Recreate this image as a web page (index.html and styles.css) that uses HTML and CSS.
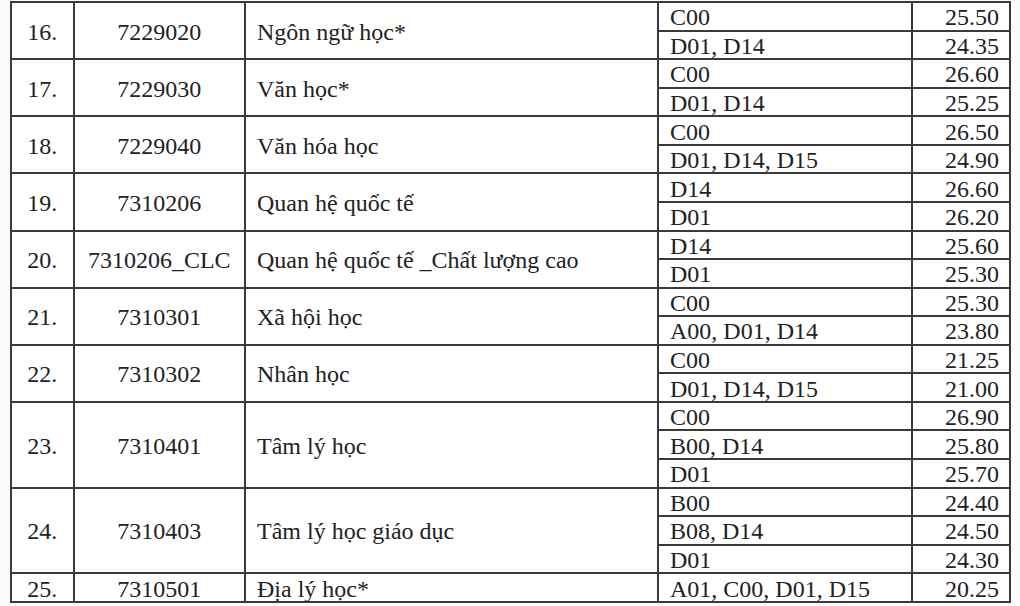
FILE: index.html
```html
<!DOCTYPE html>
<html lang="vi">
<head>
<meta charset="utf-8">
<title>Điểm chuẩn</title>
<link rel="stylesheet" href="styles.css">
</head>
<body>
<div class="page">
<table class="scores">
  <colgroup>
    <col class="c-stt"><col class="c-code"><col class="c-name"><col class="c-combo"><col class="c-score">
  </colgroup>
  <tbody>
    <tr><td class="stt" rowspan="2">16.</td><td class="code" rowspan="2">7229020</td><td class="name" rowspan="2">Ngôn ngữ học*</td><td class="combo">C00</td><td class="score">25.50</td></tr>
    <tr><td class="combo">D01, D14</td><td class="score">24.35</td></tr>

    <tr><td class="stt" rowspan="2">17.</td><td class="code" rowspan="2">7229030</td><td class="name" rowspan="2">Văn học*</td><td class="combo">C00</td><td class="score">26.60</td></tr>
    <tr><td class="combo">D01, D14</td><td class="score">25.25</td></tr>

    <tr><td class="stt" rowspan="2">18.</td><td class="code" rowspan="2">7229040</td><td class="name" rowspan="2">Văn hóa học</td><td class="combo">C00</td><td class="score">26.50</td></tr>
    <tr><td class="combo">D01, D14, D15</td><td class="score">24.90</td></tr>

    <tr><td class="stt" rowspan="2">19.</td><td class="code" rowspan="2">7310206</td><td class="name" rowspan="2">Quan hệ quốc tế</td><td class="combo">D14</td><td class="score">26.60</td></tr>
    <tr><td class="combo">D01</td><td class="score">26.20</td></tr>

    <tr><td class="stt" rowspan="2">20.</td><td class="code" rowspan="2">7310206_CLC</td><td class="name" rowspan="2">Quan hệ quốc tế _Chất lượng cao</td><td class="combo">D14</td><td class="score">25.60</td></tr>
    <tr><td class="combo">D01</td><td class="score">25.30</td></tr>

    <tr><td class="stt" rowspan="2">21.</td><td class="code" rowspan="2">7310301</td><td class="name" rowspan="2">Xã hội học</td><td class="combo">C00</td><td class="score">25.30</td></tr>
    <tr><td class="combo">A00, D01, D14</td><td class="score">23.80</td></tr>

    <tr><td class="stt" rowspan="2">22.</td><td class="code" rowspan="2">7310302</td><td class="name" rowspan="2">Nhân học</td><td class="combo">C00</td><td class="score">21.25</td></tr>
    <tr><td class="combo">D01, D14, D15</td><td class="score">21.00</td></tr>

    <tr><td class="stt" rowspan="3">23.</td><td class="code" rowspan="3">7310401</td><td class="name" rowspan="3">Tâm lý học</td><td class="combo">C00</td><td class="score">26.90</td></tr>
    <tr><td class="combo">B00, D14</td><td class="score">25.80</td></tr>
    <tr><td class="combo">D01</td><td class="score">25.70</td></tr>

    <tr><td class="stt" rowspan="3">24.</td><td class="code" rowspan="3">7310403</td><td class="name" rowspan="3">Tâm lý học giáo dục</td><td class="combo">B00</td><td class="score">24.40</td></tr>
    <tr><td class="combo">B08, D14</td><td class="score">24.50</td></tr>
    <tr><td class="combo">D01</td><td class="score">24.30</td></tr>

    <tr><td class="stt">25.</td><td class="code">7310501</td><td class="name">Địa lý học*</td><td class="combo">A01, C00, D01, D15</td><td class="score">20.25</td></tr>
  </tbody>
</table>
</div>
</body>
</html>
```

FILE: styles.css
```css
html, body {
  margin: 0;
  padding: 0;
  background: #fbfbfb;
}

.page {
  width: 1020px;
  height: 606px;
  padding: 1px 0 0 10px;
  box-sizing: border-box;
  overflow: hidden;
}

.scores {
  border-collapse: collapse;
  table-layout: fixed;
  width: 1001px;
  background: #ffffff;
  font-family: "Liberation Serif", "Times New Roman", serif;
  font-size: 24px;
  color: #222222;
}

.c-stt { width: 62.5px; }
.c-code { width: 171.5px; }
.c-name { width: 413px; }
.c-combo { width: 254px; }
.c-score { width: 98px; }

.scores tr {
  height: 28.57px;
}

.scores td {
  border: 2px solid #3a3a3a;
  padding: 2px 11px 0 11px;
  line-height: 24px;
  white-space: nowrap;
  vertical-align: middle;
}

.stt,
.code {
  text-align: center;
}

.scores td.stt {
  padding-left: 4px;
  padding-right: 4px;
}

.name,
.combo {
  text-align: left;
}

.score {
  text-align: right;
}

.scores td.score {
  padding-right: 10px;
}
```
